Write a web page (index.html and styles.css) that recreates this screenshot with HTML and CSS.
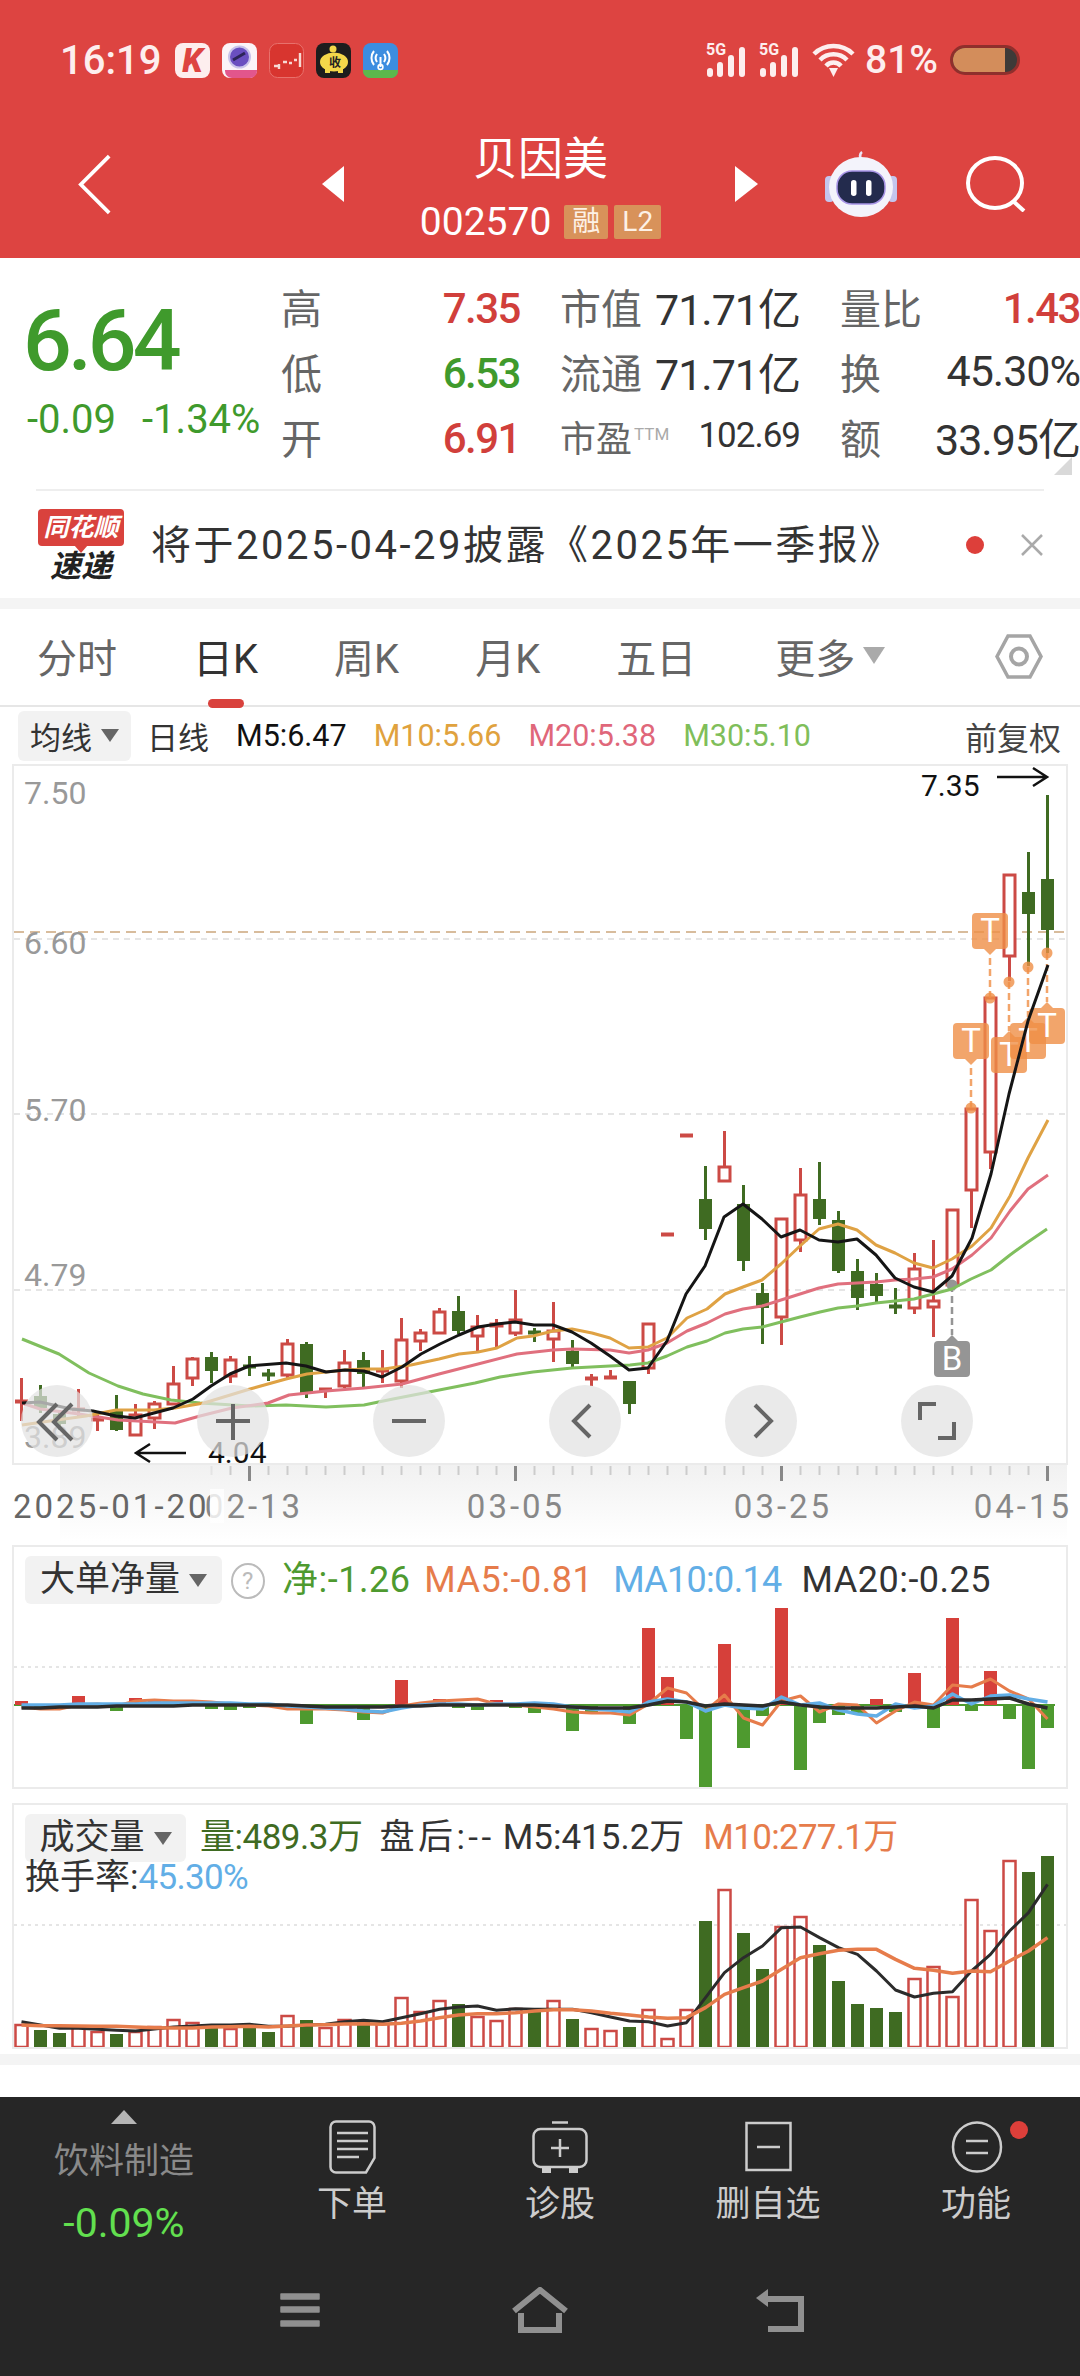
FILE: index.html
```html
<!DOCTYPE html>
<html lang="zh-CN">
<head>
    <meta charset="UTF-8">
    <meta name="viewport" content="width=device-width, initial-scale=1.0">
    <title>贝因美 002570</title>
    <link rel="stylesheet" href="styles.css">
</head>
<body>

    <header class="header">
        <div class="status-bar">
            <span class="clock">16:19</span>
            <div class="app-icons">
                <span class="app app-k">K</span>
                <svg class="app" viewBox="0 0 35 35"><rect width="35" height="35" rx="8" fill="#fbf4f8"/><circle cx="17.5" cy="14" r="10.5" fill="#6a4fc0" stroke="#c9c3ea" stroke-width="2"/><path d="M11 17l12-7" stroke="#2c2458" stroke-width="3"/><path d="M3 27h32v1a7 7 0 0 1-7 7H10a7 7 0 0 1-7-7z" fill="#e2568c"/></svg>
                <svg class="app" viewBox="0 0 35 35"><rect x=".5" y=".5" width="34" height="34" rx="8" fill="#d8352f" stroke="#e8716c"/><path d="M5 23h4M10 21v5M14 19h4M20 20h3M25 17h3M31 10v14" stroke="#f7d9d4" stroke-width="2.4"/></svg>
                <svg class="app" viewBox="0 0 35 35"><rect width="35" height="35" rx="8" fill="#1d1d1d"/><circle cx="17" cy="6" r="3.5" fill="#f4d84a"/><ellipse cx="18" cy="19" rx="14" ry="9.5" fill="#f4d84a"/><path d="M9 25h5v5H9zM22 25h5v5h-5z" fill="#f4d84a"/><text x="13" y="24" class="pig-text">收</text></svg>
                <svg class="app" viewBox="0 0 35 35"><rect width="35" height="35" rx="8" fill="#3c8de0"/><path d="M0 27h35v1a7 7 0 0 1-7 7H7a7 7 0 0 1-7-7z" fill="#5cb84c"/><path d="M11 8a11 11 0 0 0 0 14M24 8a11 11 0 0 1 0 14M14 11a7 7 0 0 0 0 8M21 11a7 7 0 0 1 0 8M17.5 14v10" fill="none" stroke="#fff" stroke-width="2"/><circle cx="17.5" cy="24" r="2.4" fill="none" stroke="#fff" stroke-width="1.6"/></svg>
            </div>
            <div class="status-right">
                <svg class="signal" viewBox="0 -8 41 42"><text x="0" y="12" class="signal-text">5G</text><path d="M4 31v-3M14 31v-9M25 31v-16M36 31v-24" stroke="#fdeeee" stroke-width="6" stroke-linecap="round"/></svg>
                <svg class="signal" viewBox="0 -8 41 42"><text x="0" y="12" class="signal-text">5G</text><path d="M4 31v-3M14 31v-9M25 31v-16M36 31v-24" stroke="#fdeeee" stroke-width="6" stroke-linecap="round"/></svg>
                <svg class="wifi" viewBox="0 0 43 34"><path d="M2 11a28 28 0 0 1 39 0M8 17a19 19 0 0 1 27 0M14 23a10 10 0 0 1 15 0" fill="none" stroke="#fdeeee" stroke-width="4.5"/><path d="M17 25h9l-4.500 9z" fill="#fdeeee"/></svg>
                <span class="battery-pct">81%</span>
                <span class="battery"><span class="battery-fill"></span></span>
            </div>
        </div>
        <nav class="nav">
            <svg class="nav-back" viewBox="0 0 36 64"><path d="M33 2L3 32l30 30" fill="none" stroke="#fff" stroke-width="4"/></svg>
            <span class="tri-left"></span>
            <div class="stock-title">
                <div class="stock-name">贝因美</div>
                <div class="stock-code"><span>002570</span><span class="tag">融</span><span class="tag">L2</span></div>
            </div>
            <span class="tri-right"></span>
            <svg class="robot" viewBox="0 0 72 66"><path d="M36 10c-1-4-2-7 1-9" fill="none" stroke="#e9e6f7" stroke-width="2.500"/><rect x="0" y="25" width="9" height="26" rx="4" fill="#c4c6ee"/><rect x="63" y="25" width="9" height="26" rx="4" fill="#c4c6ee"/><ellipse cx="36" cy="36" rx="32" ry="30" fill="#f3f3fb"/><rect x="12" y="20" width="48" height="33" rx="15" fill="#232b4d" stroke="#a794e6" stroke-width="1.500"/><rect x="26" y="29" width="5.500" height="16" rx="2.700" fill="#fff"/><rect x="41" y="29" width="5.500" height="16" rx="2.700" fill="#fff"/></svg>
            <svg class="search" viewBox="0 0 60 56"><ellipse cx="29" cy="27" rx="27" ry="25" fill="none" stroke="#fff" stroke-width="4"/><path d="M47 45l11 10" stroke="#fff" stroke-width="4"/></svg>
        </nav>
    </header>

    <section class="quote">
        <div class="price-block">
            <div class="price">6.64</div>
            <div class="price-change"><span>-0.09</span><span>-1.34%</span></div>
        </div>
        <div class="stats">
            <div class="stat"><span class="stat-label">高</span><span class="stat-num up">7.35</span></div>
            <div class="stat"><span class="stat-label">市值</span><span class="stat-val">71.71亿</span></div>
            <div class="stat"><span class="stat-label">量比</span><span class="stat-num up">1.43</span></div>
            <div class="stat"><span class="stat-label">低</span><span class="stat-num down">6.53</span></div>
            <div class="stat"><span class="stat-label">流通</span><span class="stat-val">71.71亿</span></div>
            <div class="stat"><span class="stat-label">换</span><span class="stat-val">45.30%</span></div>
            <div class="stat"><span class="stat-label">开</span><span class="stat-num up">6.91</span></div>
            <div class="stat"><span class="stat-label stat-label-sm">市盈<sup class="ttm">TTM</sup></span><span class="stat-val stat-val-sm">102.69</span></div>
            <div class="stat"><span class="stat-label">额</span><span class="stat-val">33.95亿</span></div>
        </div>
        <span class="corner"></span>
    </section>
    <div class="divider"></div>

    <section class="ticker">
        <div class="ticker-logo">
            <div class="logo-top">同花顺</div>
            <div class="logo-bottom">速递</div>
        </div>
        <div class="ticker-text">将于2025-04-29披露《2025年一季报》</div>
        <span class="ticker-dot"></span>
        <svg class="ticker-close" viewBox="0 0 22 22"><path d="M1 1l20 20M21 1L1 21" stroke="#aaa" stroke-width="2.500"/></svg>
    </section>
    <div class="band"></div>

    <section class="tabs">
        <span class="tab">分时</span>
        <span class="tab tab-active">日K</span>
        <span class="tab">周K</span>
        <span class="tab">月K</span>
        <span class="tab">五日</span>
        <span class="tab tab-more">更多<i class="caret caret-light"></i></span>
        <svg class="tab-gear" viewBox="0 0 48 45"><path d="M2 22.500L13 2h22l11 20.500L35 43H13z" fill="none" stroke="#a5a5a5" stroke-width="3.500"/><circle cx="24" cy="22.500" r="8" fill="none" stroke="#a5a5a5" stroke-width="4"/></svg>
    </section>

    <div class="ma-row">
        <span class="chip chip-ma">均线<i class="caret"></i></span>
        <span class="ma-kind">日线</span>
        <span class="ma-black">M5:6.47</span>
        <span class="ma-orange">M10:5.66</span>
        <span class="ma-pink">M20:5.38</span>
        <span class="ma-green">M30:5.10</span>
        <span class="ma-adjust">前复权</span>
    </div>

    <section class="kline">
        <svg id="klineChart" class="chart-svg" viewBox="0 763 1080 777" width="1080" height="777"></svg>
        <div class="chart-tools">
            <span class="tool"><svg viewBox="0 0 72 72"><path d="M36 19L18 37l18 18M51 19L33 37l18 18" fill="none" stroke="#666" stroke-width="4"/></svg></span>
            <span class="tool"><svg viewBox="0 0 72 72"><path d="M36 19v36M19 36h34" fill="none" stroke="#666" stroke-width="4"/></svg></span>
            <span class="tool"><svg viewBox="0 0 72 72"><path d="M19 36h34" fill="none" stroke="#666" stroke-width="4"/></svg></span>
            <span class="tool"><svg viewBox="0 0 72 72"><path d="M41 20L25 36l16 16" fill="none" stroke="#666" stroke-width="4"/></svg></span>
            <span class="tool"><svg viewBox="0 0 72 72"><path d="M30 20l16 16-16 16" fill="none" stroke="#666" stroke-width="4"/></svg></span>
            <span class="tool"><svg viewBox="0 0 72 72"><path d="M19 35V19h16M53 37v16H37" fill="none" stroke="#666" stroke-width="4"/></svg></span>
        </div>
    </section>

    <section class="panel panel-flow">
        <svg id="flowChart" class="chart-svg" viewBox="0 1544 1080 245" width="1080" height="245"></svg>
        <div class="panel-legend">
            <span class="chip chip-flow">大单净量<i class="caret"></i></span>
            <span class="help">?</span>
            <span class="txt-green">净:-1.26</span>
            <span class="txt-orange">MA5:-0.81</span>
            <span class="txt-blue">MA10:0.14</span>
            <span class="txt-dark">MA20:-0.25</span>
        </div>
    </section>

    <section class="panel panel-vol">
        <svg id="volChart" class="chart-svg" viewBox="0 1802 1080 251" width="1080" height="251"></svg>
        <div class="panel-legend panel-legend-vol">
            <div class="legend-line">
                <span class="chip chip-vol">成交量<i class="caret"></i></span>
                <span class="txt-darkgreen">量:489.3万</span>
                <span class="txt-dark txt-after">盘后:--</span>
                <span class="txt-dark">M5:415.2万</span>
                <span class="txt-orange">M10:277.1万</span>
            </div>
            <div class="legend-turnover">换手率:<span class="txt-blue">45.30%</span></div>
        </div>
    </section>
    <div class="band"></div>
    <div class="spacer"></div>

    <footer class="dock">
        <div class="dock-actions">
            <div class="sector">
                <span class="sector-arrow"></span>
                <span class="sector-name">饮料制造</span>
                <span class="sector-pct">-0.09%</span>
            </div>
            <div class="action">
                <svg viewBox="0 0 47 54" width="47" height="54"><path d="M7 1.500h33a5.500 5.500 0 0 1 5.500 5.500v31L37 52.500H7A5.500 5.500 0 0 1 1.500 47V7A5.500 5.500 0 0 1 7 1.500z" fill="none" stroke="#ccc" stroke-width="2.500"/><path d="M8 13h31M8 21h31M8 29h31M8 37h22" stroke="#ccc" stroke-width="2.500"/></svg>
                <span>下单</span>
            </div>
            <div class="action">
                <svg viewBox="0 0 56 54" width="56" height="54"><path d="M20 2.500h16" stroke="#ccc" stroke-width="2.500"/><rect x="1.500" y="9" width="53" height="38" rx="7" fill="none" stroke="#ccc" stroke-width="2.500"/><path d="M28 19v18M19 28h18" stroke="#ccc" stroke-width="2.500"/><path d="M10 47h9v6h-9zM37 47h9v6h-9z" fill="#ccc"/></svg>
                <span>诊股</span>
            </div>
            <div class="action">
                <svg viewBox="0 0 47 54" width="47" height="54"><rect x="1.500" y="3" width="44" height="47" fill="none" stroke="#ccc" stroke-width="2.500"/><path d="M12 27h23" stroke="#ccc" stroke-width="2.500"/></svg>
                <span>删自选</span>
            </div>
            <div class="action">
                <svg class="func-icon" viewBox="0 0 78 54" width="78" height="54"><ellipse cx="26" cy="27" rx="24" ry="24.500" fill="none" stroke="#ccc" stroke-width="2.500"/><path d="M15 21h22M15 33h22" stroke="#ccc" stroke-width="2.500"/><circle cx="68" cy="10" r="9" fill="#dd3f3a"/></svg>
                <span>功能</span>
            </div>
        </div>
        <div class="sys-nav">
            <svg viewBox="0 0 44 38" width="44" height="38"><path d="M3 3h38v5H3zM3 16h38v5H3zM3 30h38v5H3z" fill="#909090" stroke="#909090" stroke-width="1.500" stroke-linejoin="round"/></svg>
            <svg viewBox="0 0 58 46" width="58" height="46"><path d="M3 24L29 3l26 21" fill="none" stroke="#909090" stroke-width="6"/><path d="M10 26v17h38V26" fill="none" stroke="#909090" stroke-width="6"/></svg>
            <svg viewBox="0 0 50 44" width="50" height="44"><path d="M12 11h34v30H13" fill="none" stroke="#909090" stroke-width="6"/><path d="M1 10L13 1v18z" fill="#909090"/></svg>
        </div>
    </footer>

    <script src="chart.js"></script>
</body>
</html>
```

FILE: styles.css
```css
* {
    box-sizing: border-box;
}

body {
    margin: 0;
    width: 1080px;
    height: 2376px;
    overflow: hidden;
    background-color: #ffffff;
    color: #333;
    font-family: Roboto, "Noto Sans CJK SC", sans-serif;
}

/* header */
.header {
    height: 258px;
    background-color: #dd4441;
    color: #fff;
}

.status-bar {
    height: 120px;
    padding: 0 61px 0 60px;
    display: flex;
    align-items: center;
    color: #fdeeee;
}

.clock {
    font-size: 40px;
    font-weight: 500;
    width: 115px;
}

.app-icons {
    display: flex;
    gap: 12px;
}

.app {
    width: 35px;
    height: 35px;
    display: block;
}

.app-k {
    background-color: #fdeeee;
    border-radius: 8px;
    color: #dd4441;
    font-size: 33px;
    font-weight: 900;
    font-style: italic;
    line-height: 35px;
    text-align: center;
}

.pig-text {
    font-size: 12px;
    font-weight: 700;
    fill: #222;
}

.status-right {
    margin-left: auto;
    display: flex;
    align-items: center;
}

.signal {
    width: 41px;
    height: 42px;
    margin: -8px 12px 0 0;
}

.signal-text {
    font-size: 16px;
    font-weight: 700;
    fill: #fdeeee;
}

.wifi {
    width: 43px;
    height: 34px;
}

.battery-pct {
    font-size: 39px;
    font-weight: 500;
    margin-left: 10px;
    width: 85px;
}

.battery {
    width: 70px;
    height: 30px;
    border: 3px solid #8f2f2c;
    border-radius: 15px;
    background-color: #3d3a38;
    overflow: hidden;
    margin-right: -1px;
}

.battery-fill {
    display: block;
    width: 81%;
    height: 100%;
    background-color: #d38d5b;
}

.nav {
    height: 138px;
    padding: 0 0 10px 78px;
    display: flex;
    align-items: center;
}

.nav-back {
    width: 34px;
    height: 63px;
}

.tri-left,
.tri-right {
    width: 0;
    height: 0;
    border-top: 18px solid transparent;
    border-bottom: 18px solid transparent;
}

.tri-left {
    margin-left: 210px;
    border-right: 22px solid #fff;
}

.tri-right {
    border-left: 23px solid #fff;
}

.stock-title {
    width: 391px;
    margin-top: 7px;
    padding-left: 2px;
    text-align: center;
}

.stock-name {
    font-size: 45px;
    line-height: 50px;
}

.stock-code {
    margin-top: 19px;
    height: 36px;
    display: flex;
    justify-content: center;
    align-items: center;
    gap: 6px;
    font-size: 39px;
    letter-spacing: 0;
}

.stock-code span:first-child {
    margin-right: 7px;
}

.tag {
    height: 34px;
    padding: 0 8px;
    background-color: #d8925a;
    border-radius: 2px;
    color: #fdf1e6;
    font-size: 28px;
    line-height: 34px;
}

.robot {
    width: 72px;
    height: 66px;
    margin-left: 67px;
}

.search {
    width: 60px;
    height: 56px;
    margin-left: 69px;
}

/* quote */
.quote {
    position: relative;
    height: 231px;
    display: flex;
    padding-left: 27px;
}

.price-block {
    width: 254px;
    padding-top: 38px;
    color: #3f9a2c;
}

.price {
    margin-left: -4px;
    font-size: 86px;
    font-weight: 500;
    line-height: 90px;
    letter-spacing: -4px;
}

.price-change {
    margin-top: 14px;
    display: flex;
    gap: 26px;
    font-size: 40px;
    line-height: 40px;
}

.stats {
    padding-top: 18px;
    display: grid;
    grid-template-columns: 239px 240px 240px;
    grid-auto-rows: 65px;
    column-gap: 40px;
}

.stat {
    display: flex;
    justify-content: space-between;
    align-items: center;
    white-space: nowrap;
}

.stat-label {
    margin-bottom: 5px;
    font-size: 41px;
    color: #666;
}

.stat-label-sm {
    font-size: 36px;
}

.ttm {
    font-size: 17px;
    vertical-align: 12px;
    line-height: 0;
    margin-left: 2px;
    color: #aaa;
}

.stat-num {
    font-size: 42px;
    font-weight: 500;
    letter-spacing: -1.500px;
}

.stat-val {
    margin-bottom: 6px;
    font-size: 43px;
    color: #333;
    letter-spacing: -1px;
}

.stat-val-sm {
    font-size: 35px;
}

.up {
    color: #d13f3b;
}

.down {
    color: #3f9a2c;
}

.corner {
    position: absolute;
    right: 8px;
    bottom: 14px;
    width: 0;
    height: 0;
    border-left: 18px solid transparent;
    border-bottom: 18px solid #d9d9d9;
}

.divider {
    height: 2px;
    margin: 0 36px;
    background-color: #eeeeee;
}

/* ticker */
.ticker {
    height: 107px;
    display: flex;
    align-items: center;
    padding-left: 38px;
}

.ticker-logo {
    width: 86px;
}

.logo-top {
    position: relative;
    height: 37px;
    background-color: #d9423d;
    border-radius: 4px;
    color: #fff;
    font-size: 25px;
    font-style: italic;
    font-weight: 700;
    line-height: 37px;
    text-align: center;
    white-space: nowrap;
}

.logo-top::after {
    content: "";
    position: absolute;
    left: 36px;
    top: 36px;
    border-left: 7px solid transparent;
    border-right: 7px solid transparent;
    border-top: 8px solid #d9423d;
}

.logo-bottom {
    margin-top: 7px;
    color: #222;
    font-size: 31px;
    font-style: italic;
    font-weight: 700;
    line-height: 27px;
    text-align: center;
}

.ticker-text {
    margin: 0 0 5px 27px;
    font-size: 40px;
    color: #333;
    white-space: nowrap;
    letter-spacing: 2.500px;
}

.ticker-dot {
    position: absolute;
    left: 966px;
    width: 18px;
    height: 18px;
    border-radius: 50%;
    background-color: #dd3f3a;
}

.ticker-close {
    position: absolute;
    left: 1021px;
    width: 22px;
    height: 22px;
}

.band {
    height: 11px;
    background-color: #f4f4f4;
}

/* tabs */
.tabs {
    height: 98px;
    display: flex;
    align-items: center;
    gap: 76px;
    padding: 0 37px 2px 37px;
    border-bottom: 2px solid #e6e6e6;
}

.tab {
    position: relative;
    font-size: 40px;
    color: #666;
    white-space: nowrap;
}

.tab-active {
    color: #333;
}

.tab-active::after {
    content: "";
    position: absolute;
    left: 15px;
    bottom: -23px;
    width: 36px;
    height: 9px;
    border-radius: 5px;
    background-color: #d9423d;
}

.tab-more {
    margin-left: 3px;
}

.tab-gear {
    width: 48px;
    height: 45px;
    margin-left: auto;
}

.caret {
    display: inline-block;
    width: 0;
    height: 0;
    margin-left: 9px;
    vertical-align: 6px;
    border-left: 9px solid transparent;
    border-right: 9px solid transparent;
    border-top: 13px solid #666;
}

.caret-light {
    margin-left: 8px;
    vertical-align: 9px;
    border-left-width: 11px;
    border-right-width: 11px;
    border-top: 17px solid #aaa;
}

/* ma row */
.ma-row {
    height: 57px;
    padding: 0 19px 0 18px;
    display: flex;
    align-items: center;
    gap: 27px;
    font-size: 30.500px;
    white-space: nowrap;
}

.chip {
    background-color: #f2f2f2;
    border-radius: 6px;
    color: #333;
    display: flex;
    align-items: center;
    justify-content: center;
}

.chip-ma {
    width: 113px;
    height: 50px;
    margin-right: -8px;
    font-size: 31px;
}

.ma-kind {
    color: #333;
    font-size: 31px;
    margin-left: -3px;
}

.ma-black {
    color: #111;
}

.ma-orange {
    color: #e0a23e;
}

.ma-pink {
    color: #e0677a;
}

.ma-green {
    color: #7fbe5a;
}

.ma-adjust {
    margin-left: auto;
    color: #444;
    font-size: 32px;
}

/* charts */
.kline {
    position: relative;
    height: 781px;
}

.chart-svg {
    display: block;
}

.chart-svg text {
    font-family: Roboto, sans-serif;
}

.chart-tools {
    position: absolute;
    left: 21px;
    top: 621px;
    display: flex;
    gap: 104px;
}

.tool {
    width: 72px;
    height: 72px;
    border-radius: 50%;
    background-color: rgba(226, 226, 226, 0.72);
}

.tool svg {
    display: block;
}

.panel {
    display: grid;
}

.panel > * {
    grid-area: 1 / 1;
}

.panel-flow {
    height: 258px;
}

.panel-vol {
    height: 251px;
}

.panel-legend {
    padding: 11px 0 0 25px;
    display: flex;
    align-items: flex-start;
    height: 60px;
    font-size: 36px;
    letter-spacing: 0.500px;
    line-height: 48px;
    white-space: nowrap;
    gap: 20px;
}

.panel-legend .txt-green {
    margin-right: -6px;
}

.panel-legend .txt-blue {
    letter-spacing: -0.700px;
}

.panel-legend-vol {
    display: block;
    height: 100px;
    font-size: 35px;
    letter-spacing: 0;
}

.legend-line {
    display: flex;
    gap: 22px;
}

.legend-line .txt-darkgreen {
    letter-spacing: -0.500px;
}

.legend-line .txt-after {
    letter-spacing: 3.500px;
    margin: 0 -14px 0 -5px;
}

.legend-line .txt-orange {
    margin-left: -3px;
    letter-spacing: -0.700px;
}

.legend-turnover {
    margin-top: -4px;
    font-size: 35px;
    line-height: 40px;
    color: #333;
}

.chip-flow {
    width: 197px;
    height: 48px;
    font-size: 35px;
    letter-spacing: 0;
}

.chip-vol {
    width: 161px;
    height: 48px;
    margin-right: -8px;
    font-size: 35px;
}

.help {
    width: 34px;
    height: 36px;
    margin: 7px -3px 0 -11px;
    border: 2px solid #bbb;
    border-radius: 50%;
    color: #bbb;
    font-size: 24px;
    line-height: 32px;
    text-align: center;
}

.txt-green {
    color: #4e9a2f;
}

.txt-darkgreen {
    color: #3f6b22;
}

.txt-orange {
    color: #e67c4b;
}

.txt-blue {
    color: #62aee6;
}

.txt-dark {
    color: #333;
}

.spacer {
    height: 32px;
}

/* bottom bar */
.dock {
    height: 279px;
    background-color: #262626;
}

.dock-actions {
    height: 170px;
    display: grid;
    grid-template-columns: 248px repeat(4, 208px);
}

.sector {
    padding-top: 13px;
    display: flex;
    flex-direction: column;
    align-items: center;
}

.sector-arrow {
    width: 0;
    height: 0;
    border-left: 13px solid transparent;
    border-right: 13px solid transparent;
    border-bottom: 14px solid #b5b5b5;
}

.sector-name {
    margin-top: 16px;
    font-size: 35px;
    line-height: 44px;
    color: #8a8a8a;
}

.sector-pct {
    margin-top: 17px;
    font-size: 41px;
    line-height: 44px;
    color: #62e04f;
}

.action {
    padding-top: 23px;
    display: flex;
    flex-direction: column;
    align-items: center;
    font-size: 35px;
    line-height: 44px;
    color: #cccccc;
}

.action svg {
    display: block;
    height: 54px;
    margin-bottom: 9px;
}

.func-icon {
    margin-left: 28px;
}

.sys-nav {
    height: 85px;
    padding-left: 180px;
    display: grid;
    grid-template-columns: repeat(3, 240px);
    justify-items: center;
    align-items: center;
}
```

FILE: chart.js
```js
const NS = 'http://www.w3.org/2000/svg';
const RED = '#cc4a45';
const DARK_GREEN = '#3f6b22';
const STEP = 19;

function xAt(i) {
    return 21.5 + STEP * i;
}

function add(svg, tag, attrs, text) {
    const el = document.createElementNS(NS, tag);
    for (const key in attrs) {
        el.setAttribute(key, attrs[key]);
    }
    if (text) el.textContent = text;
    svg.appendChild(el);
    return el;
}

function line(svg, x1, y1, x2, y2, color, width, dash) {
    const attrs = { x1, y1, x2, y2, stroke: color, 'stroke-width': width };
    if (dash) attrs['stroke-dasharray'] = dash;
    return add(svg, 'line', attrs);
}

function path(svg, pts, color, width) {
    add(svg, 'polyline', {
        points: pts.map(p => p.join(',')).join(' '),
        fill: 'none',
        stroke: color,
        'stroke-width': width,
        'stroke-linejoin': 'round'
    });
}

function byIndex(ys) {
    return ys.map((y, i) => [xAt(i), y]);
}

function frame(svg, x, y, w, h) {
    add(svg, 'rect', { x, y, width: w, height: h, fill: 'none', stroke: '#ebebeb', 'stroke-width': 2 });
}

// [wick top, body top, body bottom, wick bottom, green?]
const candles = [
    [1377, 1400, 1400, 1420, 0], [1384, 1395, 1407, 1412, 1], [1409, 1413, 1423, 1429, 1],
    [1388, 1408, 1408, 1417, 0], [1410, 1418, 1418, 1430, 0], [1394, 1410, 1429, 1430, 1],
    [1403, 1413, 1434, 1435, 0], [1400, 1402, 1417, 1428, 0], [1365, 1382, 1403, 1403, 0],
    [1356, 1357, 1377, 1385, 0], [1351, 1356, 1370, 1382, 1], [1355, 1358, 1375, 1382, 0],
    [1355, 1365, 1365, 1375, 1], [1368, 1373, 1373, 1380, 1], [1338, 1342, 1374, 1377, 0],
    [1341, 1343, 1392, 1397, 1], [1387, 1388, 1388, 1397, 0], [1349, 1361, 1385, 1387, 0],
    [1351, 1359, 1373, 1386, 1], [1349, 1369, 1369, 1382, 0], [1317, 1338, 1380, 1387, 0],
    [1328, 1331, 1340, 1350, 0], [1307, 1310, 1332, 1333, 0], [1295, 1310, 1330, 1333, 1],
    [1314, 1325, 1335, 1350, 0], [1318, 1322, 1325, 1348, 0], [1289, 1318, 1332, 1335, 0],
    [1327, 1331, 1331, 1341, 1], [1301, 1329, 1338, 1361, 0], [1339, 1350, 1363, 1368, 1],
    [1373, 1377, 1377, 1385, 0], [1369, 1376, 1376, 1377, 0], [1380, 1380, 1403, 1413, 1],
    [1322, 1322, 1367, 1373, 0], [1233, 1233, 1233, 1233, 0], [1134, 1134, 1134, 1134, 0],
    [1165, 1198, 1228, 1239, 1], [1130, 1165, 1180, 1181, 0], [1184, 1203, 1260, 1270, 1],
    [1282, 1292, 1307, 1343, 1], [1217, 1217, 1316, 1344, 0], [1167, 1193, 1239, 1251, 0],
    [1161, 1198, 1218, 1224, 1], [1210, 1219, 1270, 1272, 1], [1258, 1270, 1297, 1309, 1],
    [1272, 1283, 1295, 1301, 1], [1287, 1305, 1305, 1313, 1], [1252, 1267, 1307, 1313, 0],
    [1239, 1299, 1306, 1336, 0], [1208, 1208, 1284, 1284, 0], [1107, 1107, 1189, 1227, 0],
    [996, 996, 1151, 1168, 0], [873, 873, 955, 980, 0], [851, 891, 913, 965, 1],
    [794, 878, 929, 952, 1]
];

const m5 = [[22,1402],[40,1401],[71,1408],[93,1410],[116,1415],[135,1417],[154,1412],[173,1407],[193,1398],[211,1385],[230,1373],[249,1365],[286,1362],[306,1365],[326,1371],[345,1369],[364,1370],[382,1376],[402,1366],[421,1353],[440,1343],[459,1334],[478,1326],[497,1323],[515,1321],[534,1324],[553,1324],[572,1331],[591,1342],[610,1355],[629,1369],[648,1367],[667,1340],[686,1293],[705,1265],[724,1216],[743,1203],[762,1218],[781,1236],[800,1229],[819,1239],[838,1241],[857,1238],[876,1254],[895,1277],[914,1286],[933,1291],[952,1275],[972,1237],[991,1173],[1009,1093],[1028,1020],[1048,964]];
const m10 = [[22,1424],[57,1419],[86,1415],[116,1409],[154,1409],[175,1407],[204,1402],[250,1388],[286,1378],[307,1373],[345,1369],[364,1368],[384,1368],[411,1364],[439,1358],[459,1353],[478,1351],[497,1347],[517,1337],[533,1335],[553,1330],[572,1328],[592,1332],[610,1337],[629,1347],[648,1346],[667,1337],[687,1317],[707,1308],[725,1293],[743,1286],[762,1279],[781,1263],[800,1245],[819,1228],[838,1223],[857,1229],[876,1244],[895,1252],[914,1262],[933,1267],[952,1258],[972,1245],[991,1227],[1010,1195],[1028,1157],[1048,1119]];
const m20 = [[22,1402],[40,1408],[79,1413],[118,1419],[175,1422],[200,1415],[232,1407],[268,1402],[289,1394],[326,1390],[364,1387],[402,1383],[439,1373],[478,1363],[517,1353],[553,1349],[572,1348],[610,1349],[629,1352],[648,1349],[667,1342],[687,1330],[707,1322],[725,1313],[743,1308],[762,1305],[781,1299],[800,1293],[819,1287],[838,1283],[857,1282],[876,1281],[895,1279],[914,1278],[933,1276],[952,1268],[972,1254],[991,1237],[1010,1210],[1028,1188],[1048,1174]];
const m30 = [[22,1338],[59,1353],[89,1372],[118,1385],[143,1393],[171,1399],[200,1402],[250,1405],[286,1404],[326,1406],[364,1404],[393,1398],[429,1391],[475,1382],[500,1376],[533,1371],[572,1367],[610,1365],[630,1364],[648,1362],[667,1355],[687,1346],[707,1340],[725,1332],[743,1328],[762,1326],[781,1321],[800,1316],[820,1311],[838,1307],[857,1305],[876,1302],[895,1300],[914,1298],[933,1293],[952,1288],[971,1278],[991,1269],[1010,1254],[1028,1241],[1047,1228]];

function candle(svg, c, i) {
    const x = xAt(i);
    const color = c[4] ? DARK_GREEN : RED;
    line(svg, x, c[0], x, c[1], color, 3);
    line(svg, x, c[2], x, c[3], color, 3);
    if (c[1] === c[2]) {
        add(svg, 'rect', { x: x - 6.5, y: c[1] - 1.5, width: 13, height: 4, fill: color });
    } else if (c[4]) {
        add(svg, 'rect', { x: x - 6.5, y: c[1], width: 13, height: c[2] - c[1], fill: color });
    } else {
        add(svg, 'rect', { x: x - 5.5, y: c[1] + 1, width: 11, height: c[2] - c[1] - 1, fill: '#fff', stroke: color, 'stroke-width': 3 });
    }
}

function marker(svg, cx, boxY, dotY, label, up, color) {
    // box with a small tail, joined to its dot by a dashed line
    const tailY = up ? boxY : boxY + 36;
    const tip = up ? boxY - 6 : boxY + 42;
    line(svg, cx, dotY, cx, tip, color, 2.5, '7 4');
    add(svg, 'circle', { cx, cy: dotY, r: 5.5, fill: color });
    add(svg, 'polygon', { points: `${cx - 6},${tailY} ${cx},${tip} ${cx + 6},${tailY}`, fill: color });
    add(svg, 'rect', { x: cx - 18, y: boxY, width: 36, height: 36, rx: 4, fill: color });
    add(svg, 'text', { x: cx, y: boxY + 29, 'font-size': 33, fill: '#fff', 'text-anchor': 'middle' }, label);
}

function drawKline() {
    const svg = document.getElementById('klineChart');
    const defs = add(svg, 'defs', {});
    const grad = add(defs, 'linearGradient', { id: 'axisFade', x1: 0, y1: 0, x2: 0, y2: 1 });
    add(grad, 'stop', { offset: 0, 'stop-color': '#f1f1f1' });
    add(grad, 'stop', { offset: 1, 'stop-color': '#ffffff' });
    add(svg, 'rect', { x: 60, y: 1464, width: 1007, height: 76, fill: 'url(#axisFade)' });

    [938, 1113, 1289].forEach(y => line(svg, 14, y, 1066, y, '#dddddd', 1.5, '6 5'));
    line(svg, 14, 931, 1066, 931, '#cba77c', 1.500, '10 6');

    candles.forEach((c, i) => candle(svg, c, i));

    const orange = 'rgba(239, 143, 70, 0.8)';
    marker(svg, 990, 912, 997, 'T', false, orange);
    marker(svg, 971, 1022, 1107, 'T', false, orange);
    marker(svg, 1009, 1036, 981, 'T', true, orange);
    marker(svg, 1028, 1022, 966, 'T', true, orange);
    marker(svg, 1047, 1007, 952, 'T', true, orange);
    marker(svg, 952, 1340, 1284, 'B', true, '#959595');

    path(svg, m30, '#80bf5e', 3);
    path(svg, m20, '#e0707e', 3);
    path(svg, m10, '#dfa244', 3);
    path(svg, m5, '#151515', 3);

    frame(svg, 13, 764, 1054, 699);

    [['7.50', 803], ['6.60', 953], ['5.70', 1120], ['4.79', 1285], ['3.89', 1447]].forEach(l => {
        add(svg, 'text', { x: 24, y: l[1], 'font-size': 32, fill: '#999999' }, l[0]);
    });

    add(svg, 'text', { x: 921, y: 795, 'font-size': 30, fill: '#111' }, '7.35');
    add(svg, 'path', { d: 'M997 776h50M1033 767l14 9-14 9', fill: 'none', stroke: '#111', 'stroke-width': 2.5 });
    add(svg, 'text', { x: 208, y: 1462, 'font-size': 30, fill: '#111' }, '4.04');
    add(svg, 'path', { d: 'M186 1452h-50M150 1443l-14 9 14 9', fill: 'none', stroke: '#111', 'stroke-width': 2.5 });

    for (let i = 10; i <= 54; i++) {
        const big = (i - 12) % 14 === 0;
        const fade = i === 10 ? 0.35 : 1;
        line(svg, xAt(i), 1465, xAt(i), big ? 1480 : 1474, big ? '#888888' : '#cccccc', big ? 3 : 2).setAttribute('opacity', fade);
    }

    const dates = [['2025-01-20', 13, 'start', '#666666'], ['02-13', 254, 'middle', '#888888'],
        ['03-05', 516, 'middle', '#888888'], ['03-25', 783, 'middle', '#888888'], ['04-15', 1072, 'end', '#888888']];
    dates.forEach(d => {
        add(svg, 'text', { x: d[1], y: 1517, 'font-size': 33, 'text-anchor': d[2], fill: d[3], 'letter-spacing': 3 }, d[0]);
    });
    add(svg, 'rect', { x: 210, y: 1488, width: 14, height: 34, fill: '#fff', opacity: 0.8 });
}

// bar end per index, the zero line is y=1704
const flowBars = { 0: 1700, 1: 1709, 3: 1695, 5: 1710, 6: 1697, 7: 1698, 10: 1708, 11: 1709, 12: 1707, 15: 1723, 18: 1719, 20: 1679, 22: 1698, 23: 1707, 24: 1709, 25: 1699, 26: 1707, 27: 1712, 29: 1730, 30: 1712, 32: 1723, 33: 1627, 34: 1676, 35: 1738, 36: 1787, 37: 1643, 38: 1747, 39: 1715, 40: 1607, 41: 1769, 42: 1722, 43: 1714, 44: 1712, 45: 1698, 46: 1711, 47: 1672, 48: 1727, 49: 1617, 50: 1710, 51: 1670, 52: 1718, 53: 1768, 54: 1727 };
const flowMa5 = [1706,1708,1708,1704,1703,1705,1700,1699,1700,1700,1701,1703,1704,1705,1708,1708,1708,1709,1711,1712,1705,1702,1700,1699,1698,1703,1704,1706,1708,1711,1712,1712,1714,1703,1687,1692,1710,1694,1717,1724,1700,1695,1711,1703,1704,1722,1710,1701,1704,1684,1686,1678,1690,1698,1718];
const flowMa10 = [1704,1704,1704,1703,1703,1703,1703,1702,1702,1702,1702,1702,1703,1703,1705,1706,1707,1708,1710,1711,1707,1704,1703,1703,1704,1703,1703,1702,1703,1706,1708,1709,1711,1701,1698,1701,1710,1704,1707,1708,1696,1704,1702,1709,1713,1715,1703,1707,1705,1693,1703,1695,1694,1698,1701];
const flowMa20 = [1707,1707,1706,1706,1706,1705,1705,1705,1705,1704,1704,1704,1704,1704,1704,1705,1706,1706,1706,1706,1705,1705,1704,1704,1704,1704,1704,1704,1705,1706,1707,1707,1707,1704,1700,1701,1705,1703,1704,1705,1701,1704,1706,1707,1707,1707,1706,1705,1707,1699,1699,1698,1697,1703,1707];

function drawFlow() {
    const svg = document.getElementById('flowChart');
    line(svg, 14, 1666, 1066, 1666, '#dddddd', 1.5, '3 4');
    line(svg, 13, 1704, 1055, 1704, '#4e9a2f', 2);
    Object.keys(flowBars).forEach(k => {
        const y = flowBars[k];
        const up = y < 1704;
        add(svg, 'rect', { x: xAt(+k) - 6.5, y: up ? y : 1704, width: 13, height: Math.abs(y - 1704), fill: up ? '#d6403a' : '#4e9a2f' });
    });
    path(svg, byIndex(flowMa5), '#e67c4b', 3);
    path(svg, byIndex(flowMa10), '#62aee6', 3.5);
    path(svg, byIndex(flowMa20), '#2b2b2b', 3.5);
    frame(svg, 13, 1545, 1054, 242);
}

// top of each bar, then whether it is a filled (falling) one
const volTops = [2024,2029,2032,2027,2031,2033,2031,2026,2019,2022,2025,2028,2027,2031,2015,2019,2027,2019,2020,2023,1997,2011,2000,2003,2016,2020,2008,2010,2000,2018,2028,2030,2026,2009,2038,2009,1920,1889,1932,1968,1926,1916,1944,1980,2003,2007,2011,1978,1966,1996,1899,1930,1860,1871,1855];
const volFilled = [1,2,5,10,12,13,15,18,23,27,29,32,36,38,39,42,43,44,45,46,53,54];
const volM5 = [692,702,712,712,715,718,720,714,708,705,702,702,700,706,706,702,700,692,688,692,680,668,655,648,645,658,653,655,655,655,665,678,690,692,705,695,620,545,500,465,410,408,440,470,490,540,597,618,607,602,540,490,420,365,280];
const volM10 = [702,704,704,705,706,706,708,710,711,711,708,707,706,708,705,702,701,699,698,700,697,690,680,672,668,668,665,660,656,656,660,667,672,678,682,680,650,610,590,570,535,500,488,478,475,475,505,532,538,547,540,542,510,480,440];

function drawVol() {
    const svg = document.getElementById('volChart');
    line(svg, 14, 1924, 1066, 1924, '#dddddd', 1.5, '3 4');
    volTops.forEach((top, i) => {
        if (volFilled.includes(i)) {
            add(svg, 'rect', { x: xAt(i) - 6.5, y: top, width: 13, height: 2047 - top, fill: DARK_GREEN });
        } else {
            add(svg, 'rect', { x: xAt(i) - 6, y: top, width: 12, height: 2046 - top, fill: '#fff', stroke: RED, 'stroke-width': 2.5 });
        }
    });
    path(svg, byIndex(volM5.map(z => 1790 + z / 3)), '#2b2b2b', 3);
    path(svg, byIndex(volM10.map(z => 1790 + z / 3)), '#e67c4b', 3.5);
    frame(svg, 13, 1803, 1054, 244);
}

drawKline();
drawFlow();
drawVol();
```
